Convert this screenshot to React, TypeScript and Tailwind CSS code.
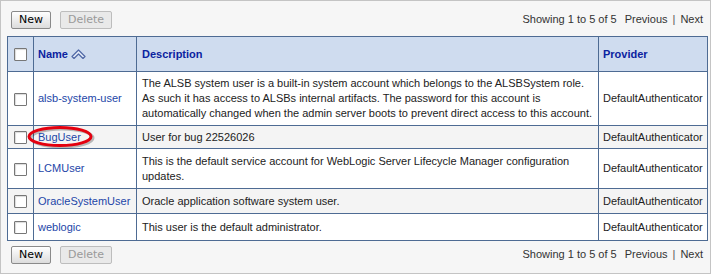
import React from "react";

type User = {
  name: string;
  description: string;
  provider: string;
  rowClass: string;
};

const users: User[] = [
  {
    name: "alsb-system-user",
    description:
      "The ALSB system user is a built-in system account which belongs to the ALSBSystem role. As such it has access to ALSBs internal artifacts. The password for this account is automatically changed when the admin server boots to prevent direct access to this account.",
    provider: "DefaultAuthenticator",
    rowClass: "h-[54px] bg-white",
  },
  {
    name: "BugUser",
    description: "User for bug 22526026",
    provider: "DefaultAuthenticator",
    rowClass: "h-[23px] bg-[#f4f4f4]",
  },
  {
    name: "LCMUser",
    description:
      "This is the default service account for WebLogic Server Lifecycle Manager configuration updates.",
    provider: "DefaultAuthenticator",
    rowClass: "h-[40px] bg-white",
  },
  {
    name: "OracleSystemUser",
    description: "Oracle application software system user.",
    provider: "DefaultAuthenticator",
    rowClass: "h-[25px] bg-[#f4f4f4]",
  },
  {
    name: "weblogic",
    description: "This user is the default administrator.",
    provider: "DefaultAuthenticator",
    rowClass: "h-[27px] bg-white",
  },
];

const Checkbox = () => (
  <span className="inline-block w-[13px] h-[13px] border border-[#777] bg-white rounded-[1px] shadow-[inset_1px_1px_1px_rgba(0,0,0,0.15)] align-middle" />
);

const SortIcon = () => (
  <svg width="15" height="10" viewBox="0 0 15 10" className="inline-block ml-[3px] -mt-[2px]">
    <path
      d="M1 7.5 L7.5 1 L14 7.5 L12 9.5 L7.5 5 L3 9.5 Z"
      fill="#e4ebf7"
      stroke="#5068a6"
      strokeWidth="1.2"
      strokeLinejoin="round"
    />
  </svg>
);

const Toolbar = () => (
  <div className="flex items-center justify-between h-[17px] pl-[4px] pr-[3px]">
    <div className="flex items-center gap-[9px]">
      <button className="h-[18px] w-[40px] border border-[#8a8a8a] rounded-[2px] bg-gradient-to-b from-white to-[#dcdcdc] text-[11px] text-black font-['DejaVu_Sans',sans-serif] leading-none">
        New
      </button>
      <button className="h-[18px] w-[52px] border border-[#bdbdbd] rounded-[2px] bg-[#e9e9e9] text-[11px] text-[#9a9a9a] font-['DejaVu_Sans',sans-serif] leading-none">
        Delete
      </button>
    </div>
    <div className="text-[11px] text-[#333]">
      Showing 1 to 5 of 5<span className="ml-[8px]">Previous</span>
      <span className="mx-[5px] text-[#555]">|</span>Next
    </div>
  </div>
);

export default function App() {
  return (
    <div className="w-[713px] h-[276px] bg-white font-['Liberation_Sans',Arial,sans-serif]">
      <div className="w-[711px] h-[274px] border border-[#c4c4c4] bg-[#f6f6f6] pl-[6px] pr-[4px] pt-[10px]">
        <Toolbar />
        <div className="relative mt-[8px]">
          <table className="w-[700px] border-collapse table-fixed text-[11px] leading-[15px] text-[#222]">
            <colgroup>
              <col className="w-[26px]" />
              <col className="w-[103px]" />
              <col className="w-[462px]" />
              <col className="w-[109px]" />
            </colgroup>
            <thead>
              <tr className="h-[35px] bg-[#cfdcef]">
                <th className="border border-[#4e6b93] text-center">
                  <Checkbox />
                </th>
                <th className="border border-[#4e6b93] text-left px-[4px] font-bold text-[#0b23a0]">
                  Name
                  <SortIcon />
                </th>
                <th className="border border-[#4e6b93] text-left px-[5px] font-bold text-[#0b23a0]">
                  Description
                </th>
                <th className="border border-[#4e6b93] text-left px-[4px] font-bold text-[#0b23a0]">
                  Provider
                </th>
              </tr>
            </thead>
            <tbody>
              {users.map((u) => (
                <tr key={u.name} className={u.rowClass}>
                  <td className="border border-[#4e6b93] text-center">
                    <Checkbox />
                  </td>
                  <td className="border border-[#4e6b93] px-[4px] text-[#1d46a8] whitespace-nowrap">
                    {u.name}
                  </td>
                  <td className="border border-[#4e6b93] px-[5px]">{u.description}</td>
                  <td className="border border-[#4e6b93] px-[4px] whitespace-nowrap">{u.provider}</td>
                </tr>
              ))}
            </tbody>
          </table>
          <svg
            width="72"
            height="28"
            viewBox="0 0 72 28"
            className="absolute left-[18px] top-[86px] pointer-events-none"
          >
            <ellipse cx="37" cy="16" rx="31" ry="9" fill="none" stroke="rgba(0,0,0,0.25)" strokeWidth="3" />
            <ellipse cx="35" cy="14.5" rx="31" ry="9" fill="none" stroke="#e4000f" strokeWidth="3" />
          </svg>
        </div>
        <div className="mt-[5px]">
          <Toolbar />
        </div>
      </div>
    </div>
  );
}
